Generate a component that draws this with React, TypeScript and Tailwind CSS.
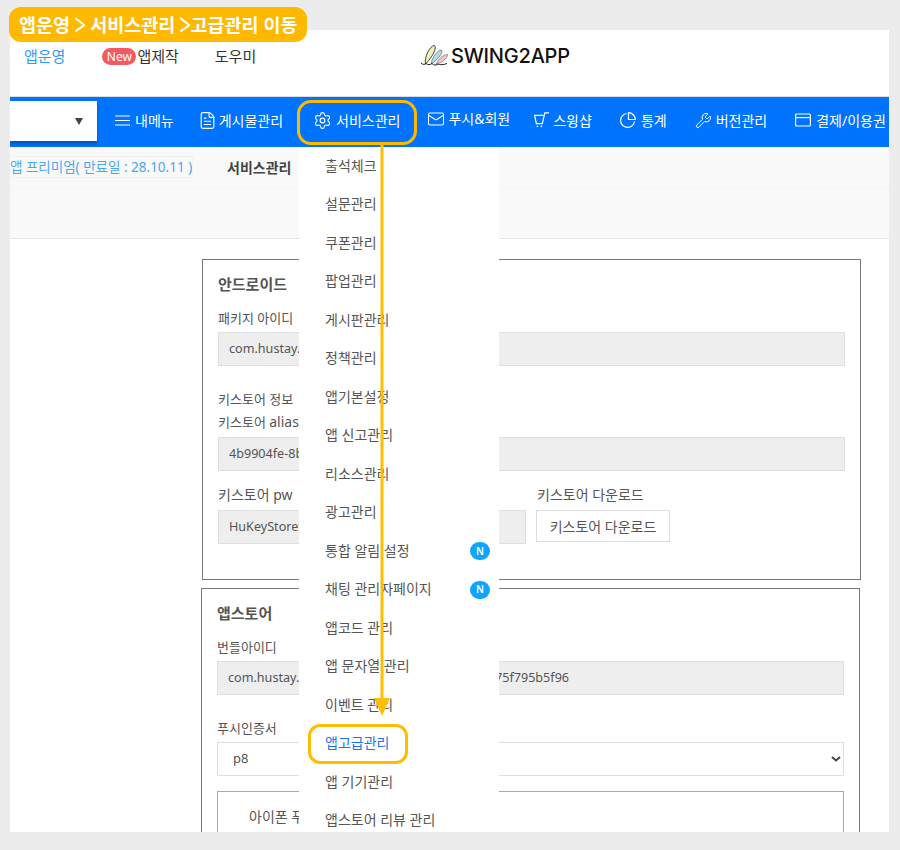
import React from "react";
import { FileText, Settings, Mail, Wrench } from "lucide-react";

const font = { fontFamily: '"Noto Sans", "Noto Sans CJK KR", sans-serif' };

const menuItems = [
  "출석체크", "설문관리", "쿠폰관리", "팝업관리", "게시판관리", "정책관리", "앱기본설정", "앱 신고관리", "리소스관리",
  "광고관리", "통합 알림 설정", "채팅 관리자페이지", "앱코드 관리", "앱 문자열 관리", "이벤트 관리", "앱고급관리", "앱 기기관리", "앱스토어 리뷰 관리",
];

const BarsIcon = () => (
  <svg width="15" height="11" viewBox="0 0 15 11" fill="none" stroke="currentColor" strokeWidth="1.2">
    <path d="M0 1h15M0 5.5h15M0 10h15" />
  </svg>
);

const CartIcon = () => (
  <svg width="15" height="16" viewBox="0 0 15 16" fill="none" stroke="currentColor" strokeWidth="1.2">
    <path d="M15 .8h-4.2L8.3 11.7H2.4L.6 3.4H10" />
    <circle cx="3.4" cy="14.4" r=".8" fill="currentColor" stroke="none" />
    <circle cx="7.4" cy="14.4" r=".8" fill="currentColor" stroke="none" />
  </svg>
);

const PieIcon = () => (
  <svg width="16" height="16" viewBox="0 0 16 16" fill="none" stroke="currentColor" strokeWidth="1.2">
    <path d="M6.5 1.5A7 7 0 1 0 14.5 9.5" />
    <path d="M8.5 .7A7 7 0 0 1 15.3 7.5H8.5Z" />
  </svg>
);

const CardIcon = () => (
  <svg width="16" height="14" viewBox="0 0 16 14" fill="none" stroke="currentColor" strokeWidth="1.2">
    <rect x=".6" y="1" width="14.8" height="12" rx="1" />
    <path d="M.6 4.6h14.8" />
  </svg>
);

const Field = ({ value, className = "" }: { value: string; className?: string }) => (
  <div className={`h-[34px] bg-[#eeeeee] border border-[#dde0e0] pl-[10px] flex items-center text-[12.6px] text-[#555] whitespace-nowrap overflow-hidden ${className}`}>
    {value}
  </div>
);

const Logo = () => (
  <div className="flex items-center gap-[3px]">
    <svg width="27" height="22" viewBox="0 0 27 22" fill="none">
      <path d="M4.5 19C3 12 9 1 13 .5c3 0 1 9-8.5 18.5z" fill="#eef0b8" stroke="#333" strokeWidth=".9" />
      <path d="M10 19C11 12 17 5 20.5 5c2 1-2 9-10.5 14z" fill="#b4dbe8" stroke="#333" strokeWidth=".5" />
      <path d="M15 19.5C17 14 23 9 26.5 9.5c1 2-4 8-11.5 10z" fill="#edc0cc" stroke="#333" strokeWidth=".4" />
      <path d="M0 18c2 2 4 1.5 5 .5 2 1.5 4 1.5 6 0 2 2 4 2 6 .5 2 1 5 1 9-.5" stroke="#222" strokeWidth="1" />
    </svg>
    <span className="text-[20px] font-medium leading-none tracking-[-0.2px] text-[#111]" style={{ fontFamily: "Inter, sans-serif" }}>SWING2APP</span>
  </div>
);

export default function App() {
  return (
    <div className="relative w-[900px] h-[850px] bg-[#ececec] pt-[30px] pl-[10px] overflow-hidden" style={font}>
      <div className="relative w-[879px] h-[802px] bg-white overflow-hidden">
        {/* top bar */}
        <div className="h-[67px] border-b border-[#dddddd] relative">
          <div className="flex items-center h-[53px] text-[15px] text-[#333] pl-[14px]">
            <span className="text-[#2a9df4]">앱운영</span>
            <span className="ml-[37px] h-[17px] w-[34px] rounded-full bg-[#f25b5f] text-white text-[12px] flex items-center justify-center">New</span>
            <span className="ml-[1px]">앱제작</span>
            <span className="ml-[36px]">도우미</span>
          </div>
          <div className="absolute left-[411px] top-[15px]"><Logo /></div>
        </div>

        {/* blue nav */}
        <div className="h-[50px] bg-[#0073ff] flex items-center text-white text-[14px] whitespace-nowrap">
          <div className="w-[87px] h-[40px] mb-[2px] shrink-0 bg-white shadow-[0_3px_3px_rgba(0,0,0,0.25)] flex items-center justify-end pr-[14px]">
            <span className="w-0 h-0 border-l-[4px] border-r-[4px] border-t-[7px] border-l-transparent border-r-transparent border-t-[#444]" />
          </div>
          <div className="flex items-center pb-[4px]">
            <div className="ml-[18px] flex items-center gap-[5px]"><BarsIcon />내메뉴</div>
            <div className="ml-[24px] flex items-center gap-[2px]"><FileText size={19} strokeWidth={1.4} />게시물관리</div>
            <div className="relative ml-[30px] flex items-center gap-[4px]">
              <Settings size={19} strokeWidth={1.4} />서비스관리
              <div className="absolute left-[-16px] top-[-10px] w-[120px] h-[45px] rounded-[14px] border-[3px] border-[#fdb900]" />
            </div>
            <div className="ml-[27px] flex items-center gap-[3px] -mt-[3px]"><Mail size={18} strokeWidth={1.4} />푸시&회원</div>
            <div className="ml-[24px] flex items-center gap-[4px]"><CartIcon />스윙샵</div>
            <div className="ml-[28px] flex items-center gap-[5px]"><PieIcon />통계</div>
            <div className="ml-[28px] flex items-center gap-[4px]"><Wrench size={17} strokeWidth={1.4} />버전관리</div>
            <div className="ml-[28px] flex items-center gap-[5px]"><CardIcon />결제/이용권</div>
          </div>
        </div>

        {/* sub bar */}
        <div className="h-[92px] bg-[#f9f9f9] border-b border-[#e6e6e6]">
          <div className="h-[41px] border-b border-[#f5f5f5] flex items-center whitespace-nowrap">
            <span className="text-[13.5px] text-[#4aa8f0] w-[183px] h-[22px] flex items-center border border-l-0 border-[#f2f2f2] overflow-hidden">앱 프리미엄( 만료일 : 28.10.11 )</span>
            <span className="ml-[34px] text-[14px] font-semibold text-[#444]">서비스관리</span>
          </div>
        </div>

        {/* forms */}
        <div className="pl-[192px] pr-[28px] pt-[20px] text-[13px] text-[#555]">
          <div className="h-[321px] border border-[#777] px-[15px] pt-[13px]">
            <div className="text-[15px] font-semibold leading-[22px]">안드로이드</div>
            <div className="mt-[14px] leading-[18px]">패키지 아이디</div>
            <Field value="com.hustay.swing" className="mt-[5px]" />
            <div className="mt-[24px] leading-[18px]">키스토어 정보</div>
            <div className="mt-[5px] leading-[18px]">키스토어 <span className="text-[14px]">alias</span></div>
            <Field value="4b9904fe-8b21" className="mt-[6px]" />
            <div className="flex gap-[10px] mt-[15px]">
              <div className="w-[308px]">
                <div className="leading-[18px] text-[14px]">키스토어 pw</div>
                <Field value="HuKeyStoreSwing" className="mt-[6px]" />
              </div>
              <div>
                <div className="leading-[18px] text-[14px] ml-px">키스토어 다운로드</div>
                <div className="mt-[6px] w-[134px] h-[32px] border border-[#dddddd] flex items-center justify-center text-[14px]">키스토어 다운로드</div>
              </div>
            </div>
          </div>
          <div className="mt-[8px] -ml-px w-[659px] h-[300px] border border-[#777] px-[15px] pt-[13px]">
            <div className="text-[15px] font-semibold leading-[22px]">앱스토어</div>
            <div className="mt-[14px] leading-[18px]">번들아이디</div>
            <Field value="com.hustay.swing.a3c9d1e8b7246f0ac4d1ecf75f795b5f96" className="mt-[5px]" />
            <div className="mt-[24px] leading-[18px]">푸시인증서</div>
            <div className="mt-[5px] h-[34px] border border-[#dde0e0] pl-[15px] pr-[2px] flex items-center justify-between text-[13px]">
              p8
              <svg width="10" height="6" viewBox="0 0 10 6" fill="none" stroke="#444" strokeWidth="2"><path d="M1 1l4 3.5 4-3.5" /></svg>
            </div>
            <div className="mt-[15px] h-[80px] border border-[#aaaaaa] pl-[31px] pt-[14px] text-[14px]">
              아이폰 푸시 인증서
              <div className="mt-[5px] h-[34px] border border-[#dde0e0]" />
            </div>
          </div>
        </div>

        {/* dropdown */}
        <div className="absolute left-[289px] top-[117px] w-[200px] h-[700px] bg-white text-[14px] text-[#555]">
          <div className="-mt-[1px]">
            {menuItems.map((item, i) => {
              const hit = item === "앱고급관리";
              return (
                <div key={item} className={`relative h-[38.5px] flex items-center pl-[26px] ${hit ? "text-[#1a73f0]" : ""}`}>
                  {item}
                  {i === 10 || i === 11 ? (
                    <span className="absolute left-[171px] top-[11px] w-[20px] h-[18px] rounded-full bg-[#10a4ff] text-white text-[10px] font-semibold flex items-center justify-center">N</span>
                  ) : null}
                  {hit ? <div className="absolute left-[9px] top-[0px] w-[100px] h-[40px] rounded-[12px] border-[3px] border-[#fdbd00]" /> : null}
                </div>
              );
            })}
          </div>
        </div>

        {/* arrow */}
        <svg className="absolute left-[360px] top-[115px]" width="24" height="574" viewBox="0 0 24 574" fill="none">
          <rect x="10.5" y="0" width="3" height="556" fill="#fdbd00" />
          <path d="M4 553h16l-8 18z" fill="#fdbd00" />
        </svg>
      </div>

      {/* callout */}
      <div className="absolute left-[9px] top-[7px] h-[35px] w-[298px] rounded-[12px] bg-[#ffb900] text-white text-[18.5px] font-bold leading-[35px] pl-[10px] whitespace-nowrap">
        앱운영 <span className="inline-block text-[20px] font-normal scale-y-[1.5] -mx-[0.5px]">&gt;</span> 서비스관리 <span className="inline-block text-[20px] font-normal scale-y-[1.5] -mx-[0.5px]">&gt;</span>고급관리 이동
      </div>
    </div>
  );
}
